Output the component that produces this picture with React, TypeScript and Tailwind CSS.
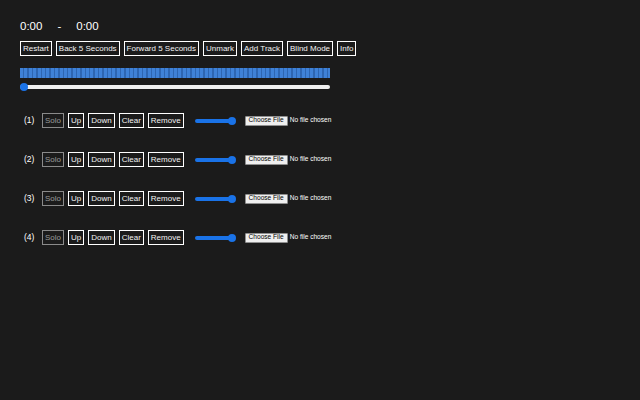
import React from "react";

const Btn = ({ label, dim }: { label: string; dim?: boolean }) => (
  <div
    className={
      "h-[15px] flex items-center px-[2px] border text-[8px] leading-none " +
      (dim ? "border-[#8a8a8a] text-[#9a9a9a]" : "border-white text-[#f2f2f2]")
    }
  >
    {label}
  </div>
);

const TrackRow = ({ n }: { n: number }) => (
  <div className="flex items-center h-[15px]">
    <div className="w-[18px] ml-[4px] text-[8.5px] text-white">({n})</div>
    <div className="flex items-center gap-[4px]">
      <Btn label="Solo" dim />
      <Btn label="Up" />
      <Btn label="Down" />
      <Btn label="Clear" />
      <Btn label="Remove" />
    </div>
    <div className="ml-[11px] w-[42px] relative h-[8px] flex items-center">
      <div className="h-[4px] w-[38px] rounded-full bg-[#1a73e8]" />
      <div className="absolute left-[33px] top-0 w-[8px] h-[8px] rounded-full bg-[#1a73e8]" />
    </div>
    <div className="ml-[8px] flex items-center">
      <div className="h-[10px] w-[43px] bg-[#efefef] border border-[#8f8f8f] rounded-[1px] text-black text-[6.6px] leading-none flex items-center justify-center">
        Choose File
      </div>
      <div className="ml-[2px] text-[6.6px] text-white leading-none">No file chosen</div>
    </div>
  </div>
);

export default function App() {
  return (
    <div
      className="w-[640px] h-[400px] bg-[#1b1b1b] pl-[20px] pt-[20px]"
      style={{ fontFamily: '"Liberation Sans", Arial, sans-serif' }}
    >
      <div className="flex items-center h-[14px] text-[11.5px] text-white leading-none">
        <span>0:00</span>
        <span className="ml-[15px]">-</span>
        <span className="ml-[15px]">0:00</span>
      </div>
      <div className="flex items-center gap-[4px] mt-[7px]">
        <Btn label="Restart" />
        <Btn label="Back 5 Seconds" />
        <Btn label="Forward 5 Seconds" />
        <Btn label="Unmark" />
        <Btn label="Add Track" />
        <Btn label="Blind Mode" />
        <Btn label="Info" />
      </div>
      <div className="mt-[12px] w-[310px] h-[10px] bg-[repeating-linear-gradient(90deg,#3f82d8_0px,#3f82d8_3px,#2d66b3_3px,#2d66b3_4.4px)]" />
      <div className="mt-[5px] w-[310px] h-[8px] relative flex items-center">
        <div className="w-full h-[4px] bg-[#f0f0f0] rounded-full" />
        <div className="absolute left-0 top-0 w-[8px] h-[8px] rounded-full bg-[#1a73e8]" />
      </div>
      <div className="mt-[22px] flex flex-col gap-[24px]">
        <TrackRow n={1} />
        <TrackRow n={2} />
        <TrackRow n={3} />
        <TrackRow n={4} />
      </div>
    </div>
  );
}
